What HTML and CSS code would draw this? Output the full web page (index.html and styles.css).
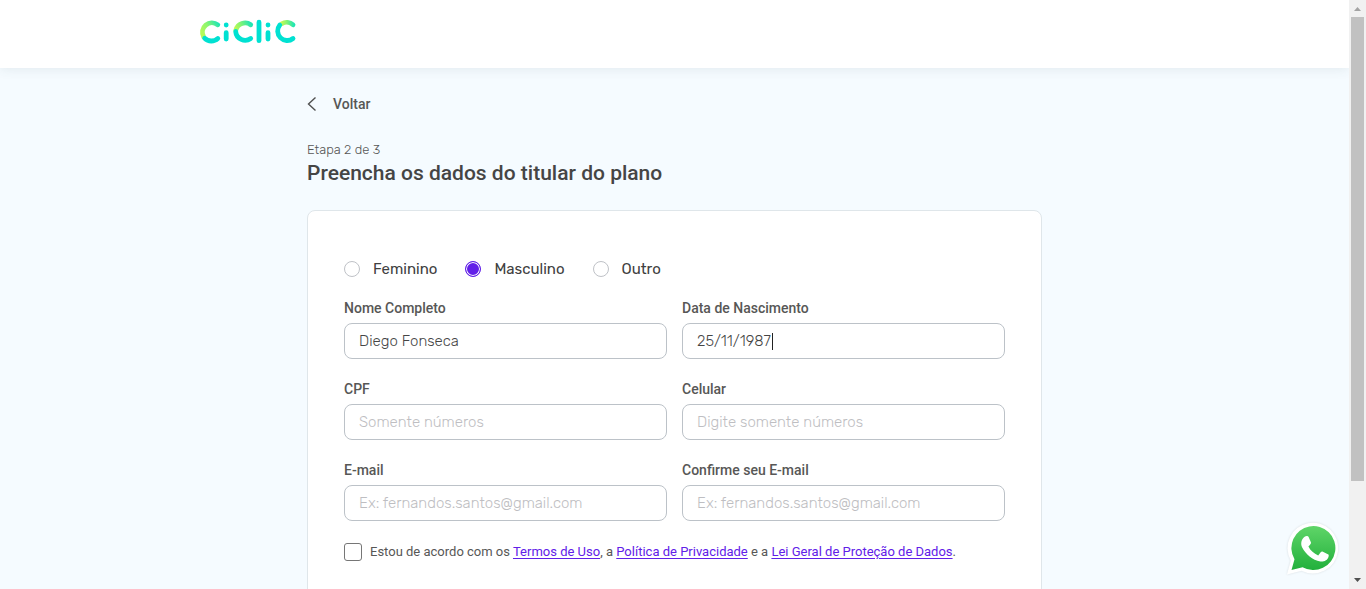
FILE: index.html
```html
<!DOCTYPE html>
<html lang="pt-BR">
<head>
<meta charset="utf-8">
<meta name="viewport" content="width=device-width, initial-scale=1">
<title>Ciclic</title>
<link rel="stylesheet" href="styles.css">
</head>
<body>
<div class="window">
  <div class="page">
    <header class="header">
      <div class="header-inner">
        <a class="logo" href="#" aria-label="Ciclic">
          <svg width="98" height="26" viewBox="199 19 98 26" fill="none" stroke-width="4.8" stroke-linecap="round">
            <defs>
              <linearGradient id="g1" gradientUnits="userSpaceOnUse" x1="203" y1="34" x2="219" y2="24"><stop offset="0" stop-color="#b4fa5a"/><stop offset=".45" stop-color="#8cf56e"/><stop offset="1" stop-color="#1fe5b4"/></linearGradient>
              <linearGradient id="g2" gradientUnits="userSpaceOnUse" x1="235" y1="31" x2="251" y2="24"><stop offset="0" stop-color="#c8fa50"/><stop offset=".4" stop-color="#8cf56e"/><stop offset="1" stop-color="#1fe5b4"/></linearGradient>
              <linearGradient id="g3" gradientUnits="userSpaceOnUse" x1="281" y1="24" x2="294" y2="24"><stop offset="0" stop-color="#c8fa50"/><stop offset=".4" stop-color="#8cf56e"/><stop offset="1" stop-color="#1fe5b4"/></linearGradient>
            </defs>
            <path stroke="url(#g1)" d="M217.8 24.8A9.5 9.5 0 0 0 203.7 37"/>
            <path stroke="#00e1d2" d="M204.7 38.3A9.5 9.5 0 0 0 217.8 38.5"/>
            <path stroke="url(#g2)" d="M250.7 24.8A9.5 9.5 0 0 0 235.900 30"/>
            <path stroke="#00e1d2" d="M235.700 31.500A9.5 9.5 0 0 0 250.7 38.5"/>
            <path stroke="url(#g3)" d="M293 24.8A9.5 9.5 0 0 0 281.800 23.700"/>
            <path stroke="#00e1d2" d="M279.800 25A9.500 9.500 0 0 0 293 38.500"/>
            <path stroke="#00e1d2" d="M226.200 24.900V25M226.200 32.700V39M259 22.200V40.700M268 24.900V25M268 32.700V39"/>
          </svg>
        </a>
      </div>
    </header>
    <main class="content">
      <a class="back" href="#">
        <svg width="10" height="16" viewBox="0 0 10 16" fill="none" stroke="#505050" stroke-width="1.4"><path d="M8.500 1.500 1.500 8l7 6.500"/></svg>
        Voltar
      </a>
      <p class="step">Etapa 2 de 3</p>
      <h1 class="title">Preencha os dados do titular do plano</h1>
      <form class="card">
        <div class="genders" role="radiogroup" aria-label="Gênero">
          <label class="gender"><input class="radio" type="radio" name="genero">Feminino</label>
          <label class="gender"><input class="radio" type="radio" name="genero" checked>Masculino</label>
          <label class="gender"><input class="radio" type="radio" name="genero">Outro</label>
        </div>
        <div class="fields">
          <div class="field"><label for="nome">Nome Completo</label><input id="nome" type="text" value="Diego Fonseca"></div>
          <div class="field"><label for="nascimento">Data de Nascimento</label><div class="editing"><input id="nascimento" type="text" value="25/11/1987"><span class="caret"></span></div></div>
          <div class="field"><label for="cpf">CPF</label><input id="cpf" type="text" placeholder="Somente números"></div>
          <div class="field"><label for="celular">Celular</label><input id="celular" type="tel" placeholder="Digite somente números"></div>
          <div class="field"><label for="email">E-mail</label><input id="email" type="email" placeholder="Ex: fernandos.santos@gmail.com"></div>
          <div class="field"><label for="email2">Confirme seu E-mail</label><input id="email2" type="email" placeholder="Ex: fernandos.santos@gmail.com"></div>
        </div>
        <div class="consent">
          <input class="check" id="aceite" type="checkbox">
          <label for="aceite">Estou de acordo com os <a href="#">Termos de Uso</a>, a <a href="#">Política de Privacidade</a> e a <a href="#">Lei Geral de Proteção de Dados</a>.</label>
        </div>
      </form>
    </main>
    <a class="whatsapp" href="#" aria-label="WhatsApp">
      <svg width="54" height="54" viewBox="0 0 54 54">
        <defs><linearGradient id="wa" x1="0" y1="0" x2="0" y2="1"><stop offset="0" stop-color="#5fd568"/><stop offset="1" stop-color="#22b03c"/></linearGradient></defs>
        <path fill="#fff" d="M1 53.500 4.800 39.500A25.300 25.300 0 1 1 15.500 49.700Z"/>
        <path fill="url(#wa)" d="M5.500 49 8.500 38.300A22 22 0 1 1 16.600 46.200Z"/>
        <path fill="#fff" d="M19 15.500c1-.9 3-.8 3.600.4l2.300 5.400c.4 1-.1 1.800-2.500 4.300 2.200 4.200 5.500 7 9.800 8.800l2.700-3.300c.6-.8 1.200-.8 2-.4l5 2.500c.9.500 1 .9.700 2.200-.9 3.800-4.700 5.500-8.200 5.100-8-1.300-14.700-7.300-18.200-14-1.900-4-.9-8.300 2.800-11Z"/>
      </svg>
    </a>
  </div>
  <div class="scrollbar" aria-hidden="true">
    <svg width="17" height="17" viewBox="0 0 17 17"><path fill="#a3a3a3" d="M5 11h7L8.500 7Z"/></svg>
    <div class="track"><div class="thumb"></div></div>
    <svg width="17" height="17" viewBox="0 0 17 17"><path fill="#505050" d="M5 6h7L8.500 10Z"/></svg>
  </div>
</div>
</body>
</html>
```
FILE: styles.css
```css
* { box-sizing: border-box; }
body { margin: 0; font-family: Rubik, Roboto, sans-serif; color: #575756; }
.window { display: flex; height: 100vh; overflow: hidden; }
.page { flex: 1; min-width: 0; overflow: hidden; background: #f5fbff; }
.header { position: relative; height: 68px; padding: 19px 0 0; background: #fff; box-shadow: 0 0 12px rgba(60, 80, 90, .12); }
.header-inner { max-width: 951px; margin: 0 auto; }
.logo { display: block; width: 98px; height: 26px; }
.logo svg { display: block; }
.content { max-width: 735px; margin: 0 auto; padding-top: 26px; }
.back { display: inline-flex; align-items: center; gap: 16px; height: 20px; font-family: Roboto, sans-serif; font-size: 14px; font-weight: 500; color: #575756; text-decoration: none; }
.step { margin: 25px 0 0; font-size: 13px; font-weight: 350; line-height: 18px; }
.title { margin: 0; font-family: Roboto, sans-serif; font-size: 21px; font-weight: 500; line-height: 28px; color: #454545; }
.card { min-height: 600px; margin-top: 23px; padding: 47px 36px; background: #fff; border: 1px solid #dfe6ea; border-radius: 8px; }
.genders { display: flex; gap: 28px; height: 22px; }
.gender { display: flex; align-items: center; gap: 13px; font-size: 15px; font-weight: 450; color: #404040; }
.radio { appearance: none; width: 16px; height: 16px; margin: 0; border: 1px solid #bfc2c7; border-radius: 50%; background: #fff; }
.radio:checked { border-color: #6120e8; background: #6120e8; box-shadow: inset 0 0 0 1px #fff; }
.fields { display: grid; grid-template-columns: 1fr 1fr; gap: 21px 15px; margin-top: 19px; }
.field { display: flex; flex-direction: column; gap: 6px; }
.field label { font-family: Roboto, sans-serif; font-size: 14px; font-weight: 500; line-height: 18px; }
.field input { width: 100%; height: 36px; padding: 0 14px; border: 1px solid #bcc2c8; border-radius: 8px; outline: none; background: #fff; font-family: inherit; font-size: 15px; font-weight: 350; color: #454545; }
.field input::placeholder { color: #bebec2; opacity: 1; }
.editing { position: relative; }
.editing input { display: block; }
.caret { position: absolute; top: 10px; left: 90px; width: 1px; height: 17px; background: #222; }
.consent { display: flex; align-items: center; gap: 8px; margin-top: 22px; font-family: Roboto, sans-serif; font-size: 13px; line-height: 18px; }
.consent a { color: #6120e8; text-underline-offset: 2px; }
.check { appearance: none; flex: none; width: 18px; height: 18px; margin: 0; border: 1px solid #767676; border-radius: 3px; background: #fff; }
.whatsapp { position: fixed; right: 26px; bottom: 14px; width: 54px; height: 54px; }
.whatsapp svg { display: block; filter: drop-shadow(0 0 1px rgba(0, 0, 0, .12)); }
.scrollbar { display: flex; flex-direction: column; flex: none; width: 17px; background: #f1f1f1; }
.track { flex: 1; padding: 0 2px; }
.thumb { height: 83.6%; background: #c1c1c1; }
```
